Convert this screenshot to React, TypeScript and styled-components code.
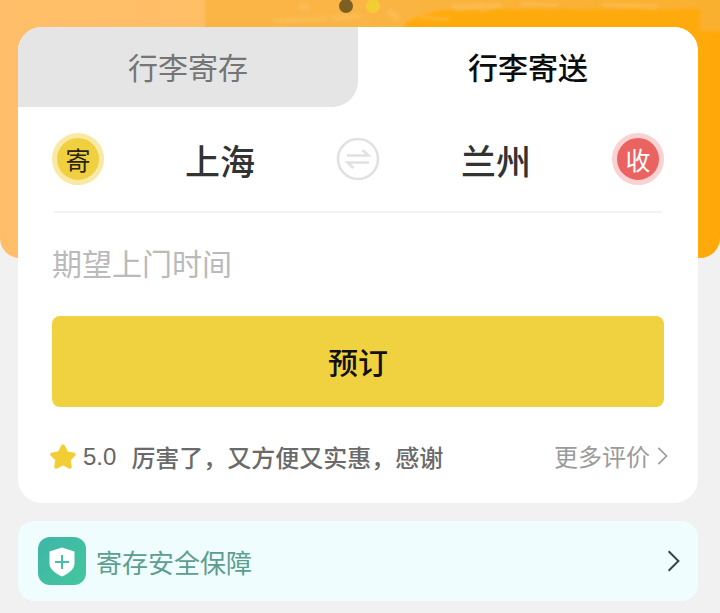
import React from "react";
import styled, { createGlobalStyle } from "styled-components";

const GlobalStyle = createGlobalStyle`
  html, body {
    margin: 0;
    padding: 0;
    background: #f1f1f1;
  }
  body {
    font-family: "Liberation Sans", "Noto Sans CJK SC", sans-serif;
  }
`;

function App() {
  return (
    <>
      <GlobalStyle />
      <Page>
        <Banner>
          <BannerArt viewBox="0 0 720 27" preserveAspectRatio="none">
            <rect x="205" y="-4" width="530" height="35" fill="#f8b23c" opacity="0.75" />
            <path
              d="M405 31v-8l8-4 6-3 9-2 8-3 12-1 10 1 14-1 10 2 16-3 18 1 18-1 12 1 20-1 14 1 20-1 20 1 16-1 16 1 48-1v22z"
              fill="#ffaa0c"
            />
            <path
              d="M300 3l10 2-2 6-10-2zM330 16l30-2 2 4-28 3zM390 8l10 9-4 4-10-9zM450 4l50-1 2 5-46 2zM270 19l56-2 1 4-50 2zM420 16l30 1-2 4-30-2zM520 2l40 1-3 4-34-1zM600 3l60 1-4 5-52-2z"
              fill="#fbd07a"
              opacity="0.3"
            />
          </BannerArt>
          <Dots>
            <Dot color="#7e5f22" />
            <Dot color="#f3ce33" />
          </Dots>
        </Banner>
        <MainCard>
          <Tabs>
            <Tab>行李寄存</Tab>
            <Tab active>行李寄送</Tab>
          </Tabs>
          <CardBody>
            <RouteRow>
              <Badge tone="send">寄</Badge>
              <City>上海</City>
              <SwapIcon viewBox="0 0 44 44">
                <circle cx="22" cy="22" r="20" fill="none" stroke="#e1e1e1" strokeWidth="2.6" />
                <path
                  d="M11 18.5h21.5l-6-5.5M33 25.5H11.5l6 5.5"
                  fill="none"
                  stroke="#e1e1e1"
                  strokeWidth="2.6"
                />
              </SwapIcon>
              <City>兰州</City>
              <Badge tone="receive">收</Badge>
            </RouteRow>
            <TimeField>期望上门时间</TimeField>
            <BookButton>预订</BookButton>
            <ReviewRow>
              <StarIcon viewBox="0 0 28 28">
                <path
                  d="M14 1.5c1 0 1.7.6 2.2 1.7l2.6 5.4 5.8.9c2.2.3 2.9 2 1.300 3.600l-4.200 4.200 1 6c.3 2-1.100 3.100-2.900 2.100L14 22.600l-5.800 2.800c-1.800 1-3.200-.1-2.900-2.100l1-6-4.200-4.200c-1.600-1.600-.9-3.300 1.300-3.600l5.800-.9 2.600-5.400C12.300 2.100 13 1.500 14 1.500z"
                  fill="#f2cd33"
                />
              </StarIcon>
              <Score>5.0</Score>
              <Quote>厉害了，又方便又实惠，感谢</Quote>
              <MoreLink>
                更多评价
                <Chevron viewBox="0 0 12 22" size={20} color="#9b9b9b">
                  <path d="M1.500 2l9 9-9 9" />
                </Chevron>
              </MoreLink>
            </ReviewRow>
          </CardBody>
        </MainCard>
        <SafetyCard>
          <ShieldTile>
            <svg viewBox="0 0 48 48" width="48" height="48">
              <path
                d="M24 10.500l12.500 4v12c0 5.500-5 9.500-12.500 13-7.500-3.500-12.500-7.500-12.500-13v-12z"
                fill="#fff"
              />
              <path d="M24 18v14M17 25h14" stroke="#45bfa6" strokeWidth="2" fill="none" />
            </svg>
          </ShieldTile>
          <SafetyText>寄存安全保障</SafetyText>
          <Chevron viewBox="0 0 12 22" size={24} color="#3b4245">
            <path d="M1.500 2l9 9-9 9" />
          </Chevron>
        </SafetyCard>
      </Page>
    </>
  );
}

const Page = styled.div`
  width: 720px;
  height: 613px;
  overflow: hidden;
  background: #f1f1f1;
`;

const Banner = styled.div`
  position: relative;
  height: 258px;
  border-radius: 0 0 20px 20px;
  overflow: hidden;
  background: linear-gradient(90deg, #ffbe69 0%, #ffbf62 50%, #ffb229 70%, #ffa908 100%);
`;

const BannerArt = styled.svg`
  display: block;
  width: 720px;
  height: 27px;
  overflow: visible;
  filter: blur(1.5px);
`;

const Dots = styled.div`
  position: absolute;
  top: 0;
  left: 339px;
  display: flex;
  gap: 13px;
`;

const Dot = styled.span<{ color: string }>`
  width: 14px;
  height: 14px;
  margin-top: -1px;
  border-radius: 50%;
  background: ${(props) => props.color};
`;

const MainCard = styled.div`
  position: relative;
  height: 476px;
  margin: -231px 22px 0 18px;
  border-radius: 24px;
  overflow: hidden;
  background: #fff;
`;

const Tabs = styled.div`
  display: grid;
  grid-template-columns: 340px 340px;
  height: 80px;
`;

const Tab = styled.div<{ active?: boolean }>`
  display: flex;
  align-items: center;
  justify-content: center;
  padding-bottom: 2px;
  font-size: 30px;
  color: ${(props) => (props.active ? "#0c0c0c" : "#757575")};
  font-weight: ${(props) => (props.active ? 500 : 400)};
  background: ${(props) => (props.active ? "#fff" : "#e5e5e5")};
  border-bottom-right-radius: ${(props) => (props.active ? "0" : "26px")};
`;

const CardBody = styled.div`
  padding: 0 34px;
`;

const RouteRow = styled.div`
  display: grid;
  grid-template-columns: 50px 1fr 44px 1fr 50px;
  align-items: center;
  height: 104px;
  margin: 0 2px;
  border-bottom: 2px solid #f3f3f3;
`;

const Badge = styled.div<{ tone: "send" | "receive" }>`
  display: flex;
  align-items: center;
  justify-content: center;
  width: 42px;
  height: 42px;
  margin-left: ${(props) => (props.tone === "send" ? "-2px" : "0")};
  border-radius: 50%;
  font-size: 25px;
  color: ${(props) => (props.tone === "send" ? "#2a2412" : "#fff")};
  background: ${(props) => (props.tone === "send" ? "#f0d03f" : "#ea6361")};
  border: 5px solid ${(props) => (props.tone === "send" ? "#f9e9a6" : "#f9d2d1")};
`;

const City = styled.div`
  text-align: center;
  font-size: 35px;
  font-weight: 500;
  color: #333;
`;

const SwapIcon = styled.svg`
  width: 44px;
  height: 44px;
`;

const TimeField = styled.div`
  display: flex;
  align-items: center;
  height: 98px;
  padding-bottom: 5px;
  font-size: 30px;
  color: #bababa;
`;

const BookButton = styled.div`
  display: flex;
  align-items: center;
  justify-content: center;
  height: 91px;
  padding-bottom: 1px;
  box-sizing: border-box;
  border-radius: 8px;
  font-size: 30px;
  font-weight: 500;
  color: #111;
  background: #f0d13f;
`;

const ReviewRow = styled.div`
  display: flex;
  align-items: center;
  height: 99px;
`;

const StarIcon = styled.svg`
  flex: none;
  width: 28px;
  height: 28px;
  margin-left: -3px;
`;

const Score = styled.span`
  margin-left: 6px;
  font-size: 24px;
  color: #666;
`;

const Quote = styled.span`
  margin-left: 15px;
  font-size: 24px;
  font-weight: 500;
  color: #6a6a6a;
`;

const MoreLink = styled.div`
  display: flex;
  align-items: center;
  gap: 7px;
  margin-left: auto;
  margin-right: -4px;
  margin-top: -2px;
  font-size: 24px;
  color: #9b9b9b;
`;

const Chevron = styled.svg.attrs({ fill: "none" })<{ size: number; color: string }>`
  flex: none;
  height: ${(props) => props.size}px;
  width: ${(props) => (props.size * 12) / 22}px;
  stroke: ${(props) => props.color};
  stroke-width: 1.8;
`;

const SafetyCard = styled.div`
  display: flex;
  align-items: center;
  height: 80px;
  margin: 18px 22px 0 18px;
  padding: 0 18px 0 20px;
  border-radius: 16px;
  background: #effdfe;
`;

const ShieldTile = styled.div`
  flex: none;
  width: 48px;
  height: 48px;
  border-radius: 12px;
  background: linear-gradient(135deg, #40b5a9, #43c79d);
`;

const SafetyText = styled.div`
  flex: 1;
  margin-left: 10px;
  font-size: 26px;
  color: #5e9e90;
`;

export default App;
